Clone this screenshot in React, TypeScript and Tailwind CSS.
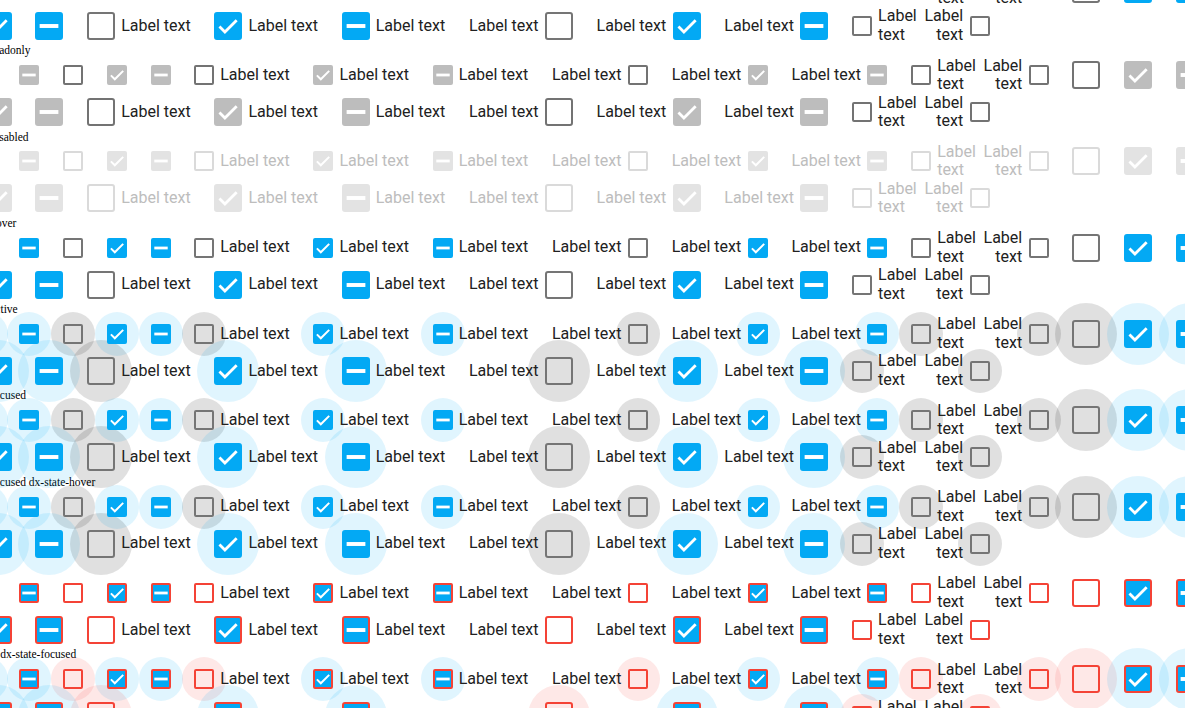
import type { ReactNode } from "react"

type Size = "s" | "l"
type Val = "u" | "c" | "i"
type State = "normal" | "readonly" | "disabled" | "halo" | "invalid" | "invalidHalo"

interface Item {
  size: Size
  value: Val
  label?: "after" | "before"
  two?: boolean
}

const items: Item[] = [
  { size: "s", value: "u" },
  { size: "s", value: "c" },
  { size: "s", value: "i" },
  { size: "s", value: "u" },
  { size: "s", value: "c" },
  { size: "s", value: "i" },
  { size: "s", value: "u", label: "after" },
  { size: "s", value: "c", label: "after" },
  { size: "s", value: "i", label: "after" },
  { size: "s", value: "u", label: "before" },
  { size: "s", value: "c", label: "before" },
  { size: "s", value: "i", label: "before" },
  { size: "s", value: "u", label: "after", two: true },
  { size: "s", value: "u", label: "before", two: true },
  { size: "l", value: "u" },
  { size: "l", value: "c" },
  { size: "l", value: "i" },
  { size: "l", value: "u" },
  { size: "l", value: "c" },
  { size: "l", value: "i" },
  { size: "l", value: "u", label: "after" },
  { size: "l", value: "c", label: "after" },
  { size: "l", value: "i", label: "after" },
  { size: "l", value: "u", label: "before" },
  { size: "l", value: "c", label: "before" },
  { size: "l", value: "i", label: "before" },
  { size: "s", value: "u", label: "after", two: true },
  { size: "s", value: "u", label: "before", two: true },
]

const groups: { title: string; state: State }[] = [
  { title: "dx-checkbox", state: "normal" },
  { title: "dx-state-readonly", state: "readonly" },
  { title: "dx-state-disabled", state: "disabled" },
  { title: "dx-state-hover", state: "normal" },
  { title: "dx-state-active", state: "halo" },
  { title: "dx-state-focused", state: "halo" },
  { title: "dx-state-focused dx-state-hover", state: "halo" },
  { title: "dx-invalid", state: "invalid" },
  { title: "dx-invalid dx-state-focused", state: "invalidHalo" },
]

function boxColors(state: State, value: Val) {
  const on = value !== "u"
  switch (state) {
    case "readonly":
      return on ? "border-[#bdbdbd] bg-[#bdbdbd]" : "border-[#737373]"
    case "disabled":
      return on ? "border-[#e3e3e3] bg-[#e3e3e3]" : "border-[#dadada]"
    case "invalid":
    case "invalidHalo":
      return on ? "border-[#f44336] bg-[#03a9f4]" : "border-[#f44336]"
    default:
      return on ? "border-[#03a9f4] bg-[#03a9f4]" : "border-[#757575]"
  }
}

function haloColor(state: State, value: Val) {
  if (state === "halo") return value === "u" ? "bg-black/[0.12]" : "bg-[#03a9f4]/[0.12]"
  if (state === "invalidHalo") return value === "u" ? "bg-[#f44336]/[0.12]" : "bg-[#03a9f4]/[0.12]"
  return null
}

function Mark({ value, size }: { value: Val; size: Size }) {
  if (value === "u") return null
  const dim = size === "s" ? "h-[20px] w-[20px]" : "h-[28px] w-[28px]"
  return (
    <svg viewBox="0 0 20 20" className={`absolute -left-[2px] -top-[2px] ${dim}`}>
      {value === "c" ? (
        <path d="M3.9 10.4 L7.8 14.3 L16.2 5.9" fill="none" stroke="#fff" strokeWidth="2" />
      ) : (
        <rect x="3.3" y="8.6" width="13.4" height="2.8" fill="#fff" />
      )}
    </svg>
  )
}

function Box({ item, state }: { item: Item; state: State }) {
  const halo = haloColor(state, item.value)
  const small = item.size === "s"
  return (
    <span className="relative flex shrink-0 items-center justify-center">
      {halo && (
        <span
          className={`absolute left-1/2 top-1/2 z-0 -translate-x-1/2 -translate-y-1/2 rounded-full ${halo} ${
            small ? "h-[44px] w-[44px]" : "h-[62px] w-[62px]"
          }`}
        />
      )}
      <span
        className={`relative z-10 block border-2 ${boxColors(state, item.value)} ${
          small ? "h-[20px] w-[20px] rounded-[2px]" : "h-[28px] w-[28px] rounded-[3px]"
        }`}
      >
        <Mark value={item.value} size={item.size} />
      </span>
    </span>
  )
}

function Label({ children, two, before, muted }: { children: ReactNode; two?: boolean; before?: boolean; muted: boolean }) {
  return (
    <span
      className={`relative z-10 block text-[16px] leading-[18.5px] ${muted ? "text-[#bdbdbd]" : "text-[#212121]"} ${
        two ? "w-min" : "whitespace-nowrap"
      } ${before ? "mr-[6.5px] text-right" : "ml-[6px]"}`}
    >
      {children}
    </span>
  )
}

function CheckItem({ item, state }: { item: Item; state: State }) {
  const muted = state === "disabled"
  const twoMargin = item.two ? (item.label === "before" ? "-ml-[8px]" : "-mr-[8px]") : ""
  return (
    <div className={`flex items-center ${twoMargin}`}>
      {item.label === "before" && (
        <Label two={item.two} before muted={muted}>
          Label text
        </Label>
      )}
      <Box item={item} state={state} />
      {item.label === "after" && (
        <Label two={item.two} muted={muted}>
          Label text
        </Label>
      )}
    </div>
  )
}

export default function App() {
  return (
    <div className="h-[708px] w-full overflow-hidden bg-white font-[Roboto,sans-serif]">
      <div className="-ml-[67.9px] -mt-[42px] w-[1290px]">
        {groups.map((g) => (
          <div key={g.title}>
            <div className="ml-[17.9px] h-[12.3px] whitespace-nowrap font-['Liberation_Serif',serif] text-[11.5px] leading-[12.3px] text-black">
              {g.title}
            </div>
            <div className="flex flex-wrap items-center gap-x-[23.7px]">
              {items.map((item, i) => (
                <CheckItem key={i} item={item} state={g.state} />
              ))}
            </div>
          </div>
        ))}
      </div>
    </div>
  )
}
